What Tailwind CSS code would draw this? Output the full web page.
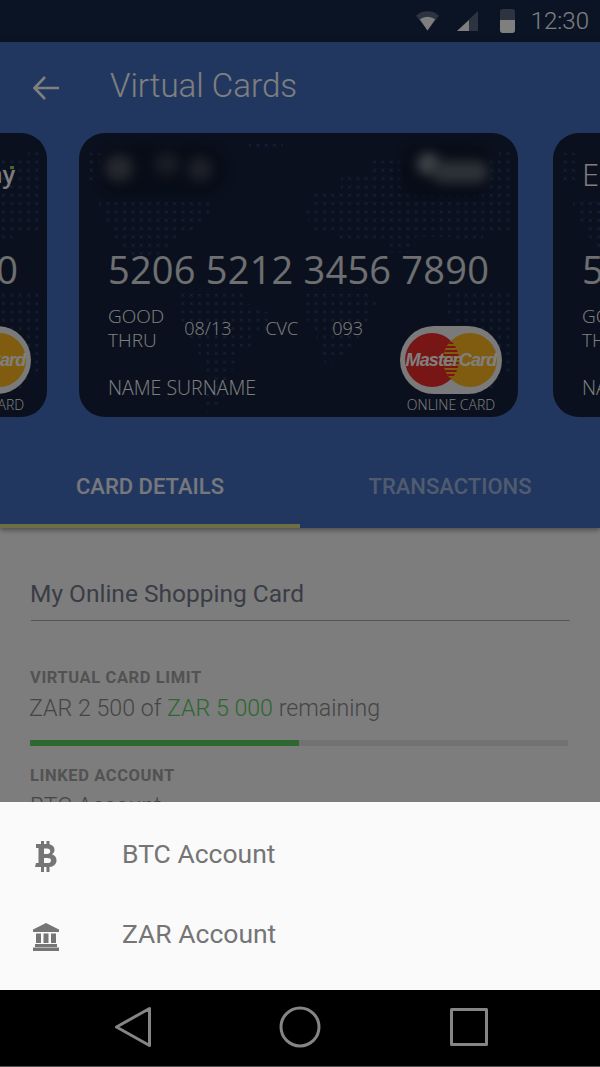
<!DOCTYPE html>
<html lang="en">
<head>
    <meta charset="UTF-8">
    <meta name="viewport" content="width=device-width, initial-scale=1.0">
    <title>Virtual Cards</title>
    <script src="https://cdn.jsdelivr.net/npm/@tailwindcss/browser@4"></script>
</head>
<body class="bg-black font-['Roboto',sans-serif]">
    <!-- Shared defs: world map dots and MasterCard logo -->
    <svg width="0" height="0" class="absolute">
        <defs>
            <pattern id="dots" width="8.33" height="8.33" patternUnits="userSpaceOnUse">
                <path d="M2.500 2.500l3 3M5.500 2.500l-3 3" stroke="#2e4f8c" stroke-width=".9" fill="none"/>
            </pattern>
            <clipPath id="lens"><path d="M51 14.800A27 27 0 0 1 51 53.200A27 27 0 0 1 51 14.800z"/></clipPath>
            <symbol id="world" viewBox="0 0 439 284">
                <path fill="url(#dots)" d="M8 20h14v28H8zM20 64h114v10l-8 14-12 10-16 6-10 12-12 8-26 0-10-14-12-18-8-18zM100 155h62l10 20 16 4 6 14-14 8-10 14-10 4-8 22-6 20-8 12-10 6-4-12 6-24-10-22-10-18-10-20zM170 10h34v8h-34zM232 58h30v-14h30v-22h128v-8h14v86h-30v10h-28v-6h-40v16h-30v-10h-40l-14-12-18 0-8-18 6-14zM222 155h68l8 16-8 14-8 16-6 14-20 12-10 4-6-16-4-18-14-18zM364 160h72v80h-14l-6 18-8 0-4-28-12-20-16-20-12-12z"/>
            </symbol>
            <symbol id="mastercard" viewBox="0 0 102 68">
                <rect x="0" y="0" width="102" height="68" rx="34" fill="#f4f4f4"/>
                <circle cx="32" cy="34" r="27" fill="#f02a2a"/>
                <circle cx="70" cy="34" r="27" fill="#ffb820"/>
                <g clip-path="url(#lens)">
                    <rect x="40" y="10" width="22" height="48" fill="#ffb820"/>
                    <path d="M40 17h22M40 21h22M40 25h22M40 29h22M40 33h22M40 37h22M40 41h22M40 45h22M40 49h22M40 53h22" stroke="#f02a2a" stroke-width="2"/>
                </g>
            </symbol>
        </defs>
    </svg>

    <div class="w-[600px] h-[1067px] flex flex-col overflow-hidden">
        <div class="relative flex-1 bg-[#fafafa] overflow-hidden">
            <!-- Status bar -->
            <div class="h-[42px] bg-[#14284a] flex items-center justify-end pr-[11px] text-white">
                <svg class="w-[23px] h-[20px] mr-[18px]" viewBox="0 0 24 20"><path d="M0 4.500A18 18 0 0 1 24 4.500L12 20z" fill="#fff" fill-opacity=".3"/><path d="M4 8.200A13 13 0 0 1 20 8.200L12 20z" fill="#fff"/></svg>
                <svg class="w-[21px] h-[20px] mr-[22px]" viewBox="0 0 21 20"><path d="M21 0V20H0z" fill="#fff" fill-opacity=".3"/><path d="M12 9V20H0z" fill="#fff"/></svg>
                <svg class="w-[15px] h-[24px] mr-[16px]" viewBox="0 0 15 24"><rect width="15" height="24" rx="3" fill="#fff" fill-opacity=".3"/><path d="M0 11H15V21a3 3 0 0 1-3 3H3a3 3 0 0 1-3-3z" fill="#fff"/></svg>
                <span class="text-[24px] leading-none font-light">12:30</span>
            </div>

            <!-- Blue header with cards and tabs -->
            <div class="relative z-10 h-[486px] bg-[#446ec0] shadow-[0_2px_5px_rgba(0,0,0,0.4)]">
                <div class="h-[91px] flex items-center text-white">
                    <svg class="w-[28px] h-[26px] ml-[32px]" viewBox="0 0 28 26" fill="none" stroke="currentColor" stroke-width="2.6"><path d="M27 13H3M13 2 2.500 13 13 24"/></svg>
                    <span class="ml-[50px] pb-[4px] text-[33.100px] leading-none font-light">Virtual Cards</span>
                </div>

                <div class="flex gap-[35px] ml-[-392px] font-['Open_Sans',sans-serif] font-light text-white">
                    <!-- Left card -->
                    <div class="relative shrink-0 w-[439px] h-[284px] rounded-[26px] bg-[#14203a] overflow-hidden">
                        <svg class="absolute inset-0 w-[439px] h-[284px]"><use href="#world"/></svg>
                        <div class="relative h-[108px] flex justify-end items-start pr-[32px] pt-[24px]">
                            <span class="relative text-[23px] font-semibold">Easy Pay<i class="absolute right-[1px] top-[9px] w-[4px] h-[3px] bg-[#9ccc3c]"></i></span>
                        </div>
                        <div class="relative pl-[29px] text-[38px] font-normal text-white/85 tracking-[0.2px] leading-[56px] whitespace-nowrap">5206 5212 3456 7890</div>
                        <div class="relative flex pl-[29px] mt-[7px] pr-[16px] justify-between">
                            <div>
                                <div class="flex items-center">
                                    <div class="text-[19px] leading-[24px]">GOOD<br>THRU</div>
                                    <div class="flex text-[18px] ml-[20px]"><span>08/13</span><span class="ml-[34px]">CVC</span><span class="ml-[34px]">093</span></div>
                                </div>
                                <div class="text-[19.500px] mt-[24px] leading-[24px]">NAME SURNAME</div>
                            </div>
                            <div class="flex flex-col items-center mt-[22px]">
                                <div class="relative w-[102px] h-[68px]">
                                    <svg class="w-[102px] h-[68px]"><use href="#mastercard"/></svg>
                                    <span class="absolute inset-0 flex items-center justify-center font-['Liberation_Sans',sans-serif] italic font-bold text-[18px] tracking-[-0.8px] text-white">MasterCard</span>
                                </div>
                                <span class="text-[14px] leading-[22px]">ONLINE CARD</span>
                            </div>
                        </div>
                    </div>

                    <!-- Main card -->
                    <div class="relative shrink-0 w-[439px] h-[284px] ml-[-3px] rounded-[26px] bg-[#14203a] overflow-hidden">
                        <svg class="absolute inset-0 w-[439px] h-[284px]"><use href="#world"/></svg>
                        <div class="relative h-[108px] flex justify-between pl-[18px] pr-[28px] pt-[12px]">
                            <div class="relative w-[130px] h-[51px] rounded-[24px] bg-[#0f1a30] blur-[3px]">
                                <span class="absolute left-[8px] top-[10px] w-[28px] h-[26px] rounded-full bg-[#4c505c] blur-[4px]"></span>
                                <span class="absolute left-[58px] top-[8px] w-[24px] h-[22px] rounded-full bg-[#343a4a] blur-[4px]"></span>
                                <span class="absolute left-[91px] top-[12px] w-[24px] h-[24px] rounded-full bg-[#3c4150] blur-[4px]"></span>
                            </div>
                            <div class="relative w-[90px] h-[55px] mt-[-2px] rounded-[20px] bg-[#0f1a30] blur-[3px]">
                                <div class="absolute left-[17px] top-[10px] w-[23px] h-[22px] rounded-full bg-[#80858d] blur-[4px]"></div>
                                <div class="absolute left-[32px] top-[18px] w-[56px] h-[22px] rounded-full bg-[#5c6270] blur-[4px]"></div>
                            </div>
                        </div>
                        <div class="relative pl-[29px] text-[38px] font-normal text-white/85 tracking-[0.2px] leading-[56px] whitespace-nowrap">5206 5212 3456 7890</div>
                        <div class="relative flex pl-[29px] mt-[7px] pr-[16px] justify-between">
                            <div>
                                <div class="flex items-center">
                                    <div class="text-[19px] leading-[24px]">GOOD<br>THRU</div>
                                    <div class="flex text-[18px] ml-[20px]"><span>08/13</span><span class="ml-[34px]">CVC</span><span class="ml-[34px]">093</span></div>
                                </div>
                                <div class="text-[19.500px] mt-[24px] leading-[24px]">NAME SURNAME</div>
                            </div>
                            <div class="flex flex-col items-center mt-[22px]">
                                <div class="relative w-[102px] h-[68px]">
                                    <svg class="w-[102px] h-[68px]"><use href="#mastercard"/></svg>
                                    <span class="absolute inset-0 flex items-center justify-center font-['Liberation_Sans',sans-serif] italic font-bold text-[18px] tracking-[-0.8px] text-white">MasterCard</span>
                                </div>
                                <span class="text-[14px] leading-[22px]">ONLINE CARD</span>
                            </div>
                        </div>
                    </div>

                    <!-- Right card -->
                    <div class="relative shrink-0 w-[439px] h-[284px] rounded-[26px] bg-[#14203a] overflow-hidden">
                        <svg class="absolute inset-0 w-[439px] h-[284px]"><use href="#world"/></svg>
                        <div class="relative h-[108px] flex items-start pl-[29px] pt-[18px]">
                            <span class="text-[31px]">Easy</span>
                        </div>
                        <div class="relative pl-[29px] text-[38px] font-normal text-white/85 tracking-[0.2px] leading-[56px] whitespace-nowrap">5206 5212 3456 7890</div>
                        <div class="relative pl-[29px] mt-[7px]">
                            <div class="text-[19px] leading-[24px]">GOOD<br>THRU</div>
                            <div class="text-[19.500px] mt-[24px] leading-[24px] whitespace-nowrap">NAME SURNAME</div>
                        </div>
                    </div>
                </div>

                <!-- Tabs -->
                <div class="absolute bottom-0 left-0 right-0 h-[83px] flex font-medium text-[22px]">
                    <div class="w-[300px] flex justify-center pt-[25px] border-b-[4px] border-[#dcdc8c] text-white/90">CARD DETAILS</div>
                    <div class="w-[300px] flex justify-center pt-[25px] text-white/50">TRANSACTIONS</div>
                </div>
            </div>

            <!-- Card details -->
            <div class="px-[30px] pt-[47px] text-[#757575]">
                <div class="ml-[1px] h-[46px] border-b border-[#aaaaaa] text-[24.500px] leading-[38px] text-[#757b8c]"><span class="ml-[-1px]">My Online Shopping Card</span></div>
                <div class="mt-[47px] text-[16.500px] tracking-[0.6px] leading-[20px] font-bold text-[#a4a4a4]">VIRTUAL CARD LIMIT</div>
                <div class="mt-[5px] ml-[-1px] text-[23.200px] leading-[30px] font-light text-[#8a8a8a]">ZAR 2 500 of <span class="text-[#58d060]">ZAR 5 000</span> remaining</div>
                <div class="mt-[17px] w-[538px] h-[6px] bg-[#e4e4e4]"><div class="h-full w-[269px] bg-[#58d060]"></div></div>
                <div class="mt-[20px] text-[16.500px] tracking-[0.6px] leading-[20px] font-bold text-[#a4a4a4]">LINKED ACCOUNT</div>
                <div class="mt-[6px] text-[23px] leading-[30px] font-light text-[#8a8a8a]">BTC Account</div>
            </div>

            <!-- Dim scrim -->
            <div class="absolute inset-0 z-20 bg-black/50"></div>

            <!-- Bottom sheet -->
            <div class="absolute z-30 bottom-0 left-0 right-0 h-[188px] bg-[#fafafa] pt-[12px] text-[#757575]">
                <div class="h-[80px] flex items-center">
                    <svg class="w-[22px] h-[31px] ml-[35px] mt-[5px]" viewBox="0 0 22 31" fill="currentColor"><path fill-rule="evenodd" d="M1 3h5V0h3v3h2.500V0h3v3.300c3 .7 5 2.700 5 5.600 0 2-1 3.500-2.500 4.400 2.700.9 4.500 2.900 4.500 5.900 0 4-3 6.500-7 6.800V31h-3v-5H9v5H6v-5H0l1-4h2.500V7H1zM9 7.500v5.500h3c2 0 3.200-1 3.200-2.800S14 7.500 12 7.500zM9 17v5h3.500c2.200 0 3.500-1 3.500-2.600S14.700 17 12.500 17z"/></svg>
                    <span class="ml-[65px] text-[26.500px] leading-none">BTC Account</span>
                </div>
                <div class="h-[80px] flex items-center">
                    <svg class="w-[26px] h-[28px] ml-[33px] mt-[5px]" viewBox="0 0 26 28" fill="currentColor"><path d="M13 0 26 6.500V9H0V6.500zM3 10.500H8V20H3zM10.500 10.500H15.500V20H10.500zM18 10.500H23V20H18zM2 21H24V24H2zM0 24.500H26V28H0z"/></svg>
                    <span class="ml-[63px] text-[26.500px] leading-none">ZAR Account</span>
                </div>
            </div>
        </div>

        <!-- Android nav bar -->
        <div class="h-[77px] bg-black border-b border-[#555] pb-[2px] flex items-center text-[#858585]">
            <svg class="w-[38px] h-[42px] ml-[114px]" viewBox="0 0 38 42" fill="none" stroke="currentColor" stroke-width="3" stroke-linejoin="round"><path d="M35.500 2.500V39.500L2.500 21z"/></svg>
            <svg class="w-[42px] h-[42px] ml-[127px]" viewBox="0 0 42 42" fill="none" stroke="currentColor" stroke-width="3"><circle cx="21" cy="21" r="19"/></svg>
            <svg class="w-[38px] h-[38px] ml-[129px]" viewBox="0 0 38 38" fill="none" stroke="currentColor" stroke-width="3" stroke-linejoin="round"><rect x="1.500" y="1.500" width="35" height="35"/></svg>
        </div>
    </div>
</body>
</html>
